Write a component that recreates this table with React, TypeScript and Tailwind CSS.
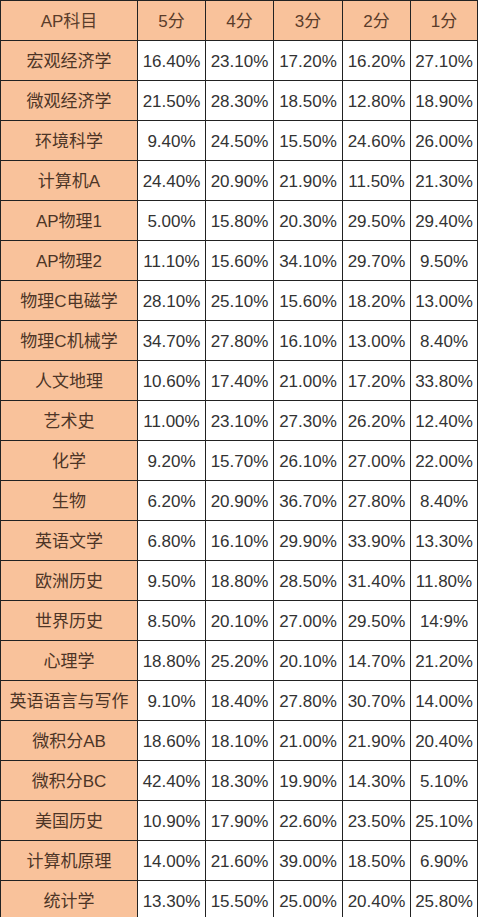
const HEADERS = ["AP科目", "5分", "4分", "3分", "2分", "1分"];

const ROWS: [string, string, string, string, string, string][] = [
  ["宏观经济学", "16.40%", "23.10%", "17.20%", "16.20%", "27.10%"],
  ["微观经济学", "21.50%", "28.30%", "18.50%", "12.80%", "18.90%"],
  ["环境科学", "9.40%", "24.50%", "15.50%", "24.60%", "26.00%"],
  ["计算机A", "24.40%", "20.90%", "21.90%", "11.50%", "21.30%"],
  ["AP物理1", "5.00%", "15.80%", "20.30%", "29.50%", "29.40%"],
  ["AP物理2", "11.10%", "15.60%", "34.10%", "29.70%", "9.50%"],
  ["物理C电磁学", "28.10%", "25.10%", "15.60%", "18.20%", "13.00%"],
  ["物理C机械学", "34.70%", "27.80%", "16.10%", "13.00%", "8.40%"],
  ["人文地理", "10.60%", "17.40%", "21.00%", "17.20%", "33.80%"],
  ["艺术史", "11.00%", "23.10%", "27.30%", "26.20%", "12.40%"],
  ["化学", "9.20%", "15.70%", "26.10%", "27.00%", "22.00%"],
  ["生物", "6.20%", "20.90%", "36.70%", "27.80%", "8.40%"],
  ["英语文学", "6.80%", "16.10%", "29.90%", "33.90%", "13.30%"],
  ["欧洲历史", "9.50%", "18.80%", "28.50%", "31.40%", "11.80%"],
  ["世界历史", "8.50%", "20.10%", "27.00%", "29.50%", "14:9%"],
  ["心理学", "18.80%", "25.20%", "20.10%", "14.70%", "21.20%"],
  ["英语语言与写作", "9.10%", "18.40%", "27.80%", "30.70%", "14.00%"],
  ["微积分AB", "18.60%", "18.10%", "21.00%", "21.90%", "20.40%"],
  ["微积分BC", "42.40%", "18.30%", "19.90%", "14.30%", "5.10%"],
  ["美国历史", "10.90%", "17.90%", "22.60%", "23.50%", "25.10%"],
  ["计算机原理", "14.00%", "21.60%", "39.00%", "18.50%", "6.90%"],
  ["统计学", "13.30%", "15.50%", "25.00%", "20.40%", "25.80%"],
];

const App = () => {
  return (
    <div className="w-[480px] h-[917px] overflow-hidden bg-white font-['Liberation_Sans','Noto_Sans_CJK_SC',sans-serif]">
      {/* Score table */}
      <div className="w-[478px] grid grid-cols-[136px_67px_67px_68px_67px_66px] auto-rows-[39px] gap-px p-px bg-[#222]">
        {HEADERS.map((h) => (
          <div
            key={h}
            className="bg-[#f9c29b] flex items-center justify-center pt-[2px] text-[17px] text-[#5a3c2a]"
          >
            {h}
          </div>
        ))}
        {ROWS.map((row) =>
          row.map((cell, i) =>
            i === 0 ? (
              <div
                key={row[0] + i}
                className="bg-[#f9c29b] flex items-center justify-center pt-[2px] text-[17px] text-[#4d3526] whitespace-nowrap"
              >
                {cell}
              </div>
            ) : (
              <div
                key={row[0] + i}
                className="bg-white flex items-center justify-center pt-[2px] text-[17px] text-[#333] whitespace-nowrap"
              >
                {cell}
              </div>
            )
          )
        )}
      </div>
    </div>
  );
};

export default App;
